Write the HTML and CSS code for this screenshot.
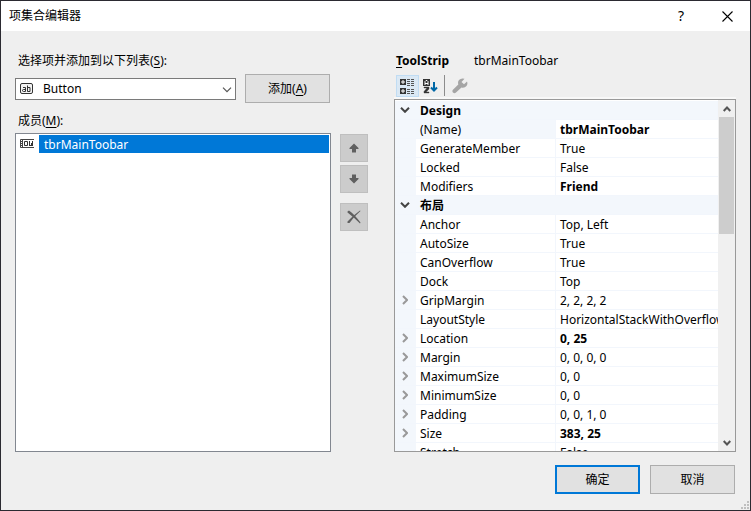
FILE: index.html
```html
<!DOCTYPE html>
<html lang="zh-CN">
<head>
<meta charset="utf-8">
<title>项集合编辑器</title>
<link rel="stylesheet" href="styles.css">
</head>
<body>
<div class="dialog">
  <header class="titlebar">
    <h1 class="title">项集合编辑器</h1>
    <button class="caption-button" type="button" aria-label="帮助"><span class="question">?</span></button>
    <button class="caption-button" type="button" aria-label="关闭"><svg width="11" height="11" viewBox="0 0 11 11"><path d="M.5.5l10 10M10.5.5l-10 10" fill="none" stroke="#000" stroke-width="1.1"/></svg></button>
  </header>

  <main class="content">
    <section class="members">
      <label class="field-label" for="item-type">选择项并添加到以下列表(<u>S</u>):</label>
      <div class="add-row">
        <div class="combo">
          <svg class="combo-icon" width="14" height="12" viewBox="0 0 14 12"><rect x=".5" y=".5" width="12" height="10" rx="1.5" fill="#f4f4f4" stroke="#333"/><path d="M3 4.500h2.500v4H3.500q-1 0-1-1t1-1h2M7.500 2.500v6h2.500v-4h-2.500" fill="none" stroke="#333"/></svg>
          <select id="item-type"><option>Button</option></select>
          <svg class="combo-arrow" width="10" height="6" viewBox="0 0 10 6"><path d="M1 .7l4 4 4-4" fill="none" stroke="#555" stroke-width="1.2"/></svg>
        </div>
        <button class="button" type="button" accesskey="a">添加(<u>A</u>)</button>
      </div>
      <div class="field-label" id="members-label">成员(<u>M</u>):</div>
      <ul class="listbox" role="listbox" aria-labelledby="members-label" tabindex="0">
        <li class="list-item" role="option" aria-selected="true">
          <svg class="item-icon" width="14" height="10" viewBox="0 0 14 10"><path d="M14 .5H.5v8H14M.5 2.500h2M.5 4.500h2M.5 6.500h2M2.500.5v8" fill="none" stroke="#444"/><path d="M4.500 2.500h3v4h-3zM9.500 2v5M10 6.500h3M12.500 2v5M11.500 4v3" fill="none" stroke="#333"/></svg>
          <span class="item-text">tbrMainToobar</span>
        </li>
      </ul>
    </section>

    <div class="order">
      <button class="order-button" type="button" disabled aria-label="上移"><svg width="10" height="10" viewBox="0 0 10 10"><path d="M5 .5L9.500 5v1H7v3.500H3V6H.5V5z" fill="#606060"/></svg></button>
      <button class="order-button" type="button" disabled aria-label="下移"><svg width="10" height="10" viewBox="0 0 10 10"><path d="M5 9.500L9.500 5V4H7V.5H3V4H.5v1z" fill="#606060"/></svg></button>
      <button class="order-button remove" type="button" disabled aria-label="移除"><svg width="14" height="14" viewBox="0 0 14 14"><path d="M.5 1.500L2 .5Q7.500 4.500 13.500 12.500L13 13.500Q7 7.500 .5 2.500z" fill="#606060"/><path d="M13.500 1L13 .5Q6 5.500.5 11.500v1.500h2Q7 6.500 13.500 1z" fill="#606060"/></svg></button>
    </div>

    <section class="properties">
      <h2 class="object"><b><u>T</u>oolStrip</b><span>tbrMainToobar</span></h2>
      <div class="toolbar" role="toolbar">
        <button class="tool active" type="button" aria-label="按分类顺序"><svg width="15" height="15" viewBox="0 0 15 15"><path d="M0 0h6v6H0zM0 9h6v6H0z" fill="#333"/><path d="M1 3h4M3 1v4M1 12h4M3 10v4" stroke="#fff"/><path d="M7 .5h3M11 .5h3M7 2.500h3M11 2.500h3M7 4.500h3M11 4.500h3M7 6.500h3M11 6.500h3M7 10.500h3M11 10.500h3M7 12.500h3M11 12.500h3M7 14.500h3M11 14.500h3" stroke="#555"/></svg></button>
        <button class="tool" type="button" aria-label="字母顺序"><svg width="15" height="15" viewBox="0 0 15 15"><path d="M0 0h7v7H0z" fill="#333"/><path d="M2 6V2.500L3 1.500h1l1 1V6M2 4.500h3" fill="none" stroke="#fff"/><path d="M1 8h5v2L3.200 13H6v1H1v-1.500L4 9H1z" fill="#333" stroke="#333" stroke-width=".4"/><path d="M11 3v9M8 8.500l3 3 3-3" fill="none" stroke="#0067a6" stroke-width="2"/></svg></button>
        <span class="separator"></span>
        <button class="tool wrench" type="button" disabled aria-label="属性页"><svg width="16" height="16" viewBox="0 0 16 16"><path d="M15 3.500l-3 2.700L9.500 4 12.500.8Q9-.2 7 2 5.500 4 6.300 6.500L.7 12Q0 13.500 1 14.500q1.200 1.200 2.700.2L9.500 9.500q3 .8 5-1.500 1.500-2 .5-4.500z" fill="#a5a5a5"/></svg></button>
      </div>
      <div class="grid">
        <div class="viewport">
          <table class="table">
            <colgroup><col class="gutter-col"><col class="name-col"><col></colgroup>
            <tbody>
              <tr class="category"><td><button class="toggle" type="button" aria-label="折叠"><svg width="10" height="6" viewBox="0 0 10 6"><path d="M1 .8l4 4 4-4"/></svg></button></td><th colspan="2">Design</th></tr>
              <tr class="current"><td></td><th>(Name)</th><td class="changed">tbrMainToobar</td></tr>
              <tr><td></td><th>GenerateMember</th><td>True</td></tr>
              <tr><td></td><th>Locked</th><td>False</td></tr>
              <tr><td></td><th>Modifiers</th><td class="changed">Friend</td></tr>
              <tr class="category"><td><button class="toggle" type="button" aria-label="折叠"><svg width="10" height="6" viewBox="0 0 10 6"><path d="M1 .8l4 4 4-4"/></svg></button></td><th colspan="2">布局</th></tr>
              <tr><td></td><th>Anchor</th><td>Top, Left</td></tr>
              <tr><td></td><th>AutoSize</th><td>True</td></tr>
              <tr><td></td><th>CanOverflow</th><td>True</td></tr>
              <tr><td></td><th>Dock</th><td>Top</td></tr>
              <tr><td><button class="toggle" type="button" aria-label="展开"><svg width="6" height="10" viewBox="0 0 6 10"><path d="M1 1l4 4-4 4"/></svg></button></td><th>GripMargin</th><td>2, 2, 2, 2</td></tr>
              <tr><td></td><th>LayoutStyle</th><td>HorizontalStackWithOverflow</td></tr>
              <tr><td><button class="toggle" type="button" aria-label="展开"><svg width="6" height="10" viewBox="0 0 6 10"><path d="M1 1l4 4-4 4"/></svg></button></td><th>Location</th><td class="changed">0, 25</td></tr>
              <tr><td><button class="toggle" type="button" aria-label="展开"><svg width="6" height="10" viewBox="0 0 6 10"><path d="M1 1l4 4-4 4"/></svg></button></td><th>Margin</th><td>0, 0, 0, 0</td></tr>
              <tr><td><button class="toggle" type="button" aria-label="展开"><svg width="6" height="10" viewBox="0 0 6 10"><path d="M1 1l4 4-4 4"/></svg></button></td><th>MaximumSize</th><td>0, 0</td></tr>
              <tr><td><button class="toggle" type="button" aria-label="展开"><svg width="6" height="10" viewBox="0 0 6 10"><path d="M1 1l4 4-4 4"/></svg></button></td><th>MinimumSize</th><td>0, 0</td></tr>
              <tr><td><button class="toggle" type="button" aria-label="展开"><svg width="6" height="10" viewBox="0 0 6 10"><path d="M1 1l4 4-4 4"/></svg></button></td><th>Padding</th><td>0, 0, 1, 0</td></tr>
              <tr><td><button class="toggle" type="button" aria-label="展开"><svg width="6" height="10" viewBox="0 0 6 10"><path d="M1 1l4 4-4 4"/></svg></button></td><th>Size</th><td class="changed">383, 25</td></tr>
              <tr><td></td><th>Stretch</th><td>False</td></tr>
            </tbody>
          </table>
        </div>
        <div class="scrollbar">
          <button class="scroll-button" type="button" aria-label="向上滚动"><svg width="8" height="6" viewBox="0 0 8 6"><path d="M.7 5L4 1.500 7.300 5" fill="none" stroke="#555" stroke-width="2"/></svg></button>
          <div class="track"><div class="thumb"></div></div>
          <button class="scroll-button" type="button" aria-label="向下滚动"><svg width="8" height="6" viewBox="0 0 8 6"><path d="M.7 1L4 4.500 7.300 1" fill="none" stroke="#555" stroke-width="2"/></svg></button>
        </div>
      </div>
    </section>
  </main>

  <footer class="footer">
    <button class="button primary" type="button">确定</button>
    <button class="button" type="button">取消</button>
  </footer>
  <svg class="grip" width="8" height="8" viewBox="0 0 8 8"><path d="M6 0h2v2H6zM3 3h2v2H3zM6 3h2v2H6zM0 6h2v2H0zM3 6h2v2H3zM6 6h2v2H6z" fill="#bfbfbf"/></svg>
</div>
</body>
</html>
```
FILE: styles.css
```css
* { box-sizing: border-box; }

body {
  margin: 0;
  font: 12px/16px "Noto Sans", "Noto Sans CJK SC", sans-serif;
  color: #000;
}

button, select { font: inherit; color: inherit; }
button { padding: 0; }
svg { display: block; flex: none; }
u { text-underline-offset: 2px; }

.dialog {
  position: relative;
  display: flex;
  flex-direction: column;
  height: 100vh;
  background: #efefef;
  border: 1px solid #2b2a31;
}

.titlebar {
  display: flex;
  height: 30px;
  align-items: center;
  padding-left: 8px;
  background: #fff;
}
.title { flex: 1; margin: 0; font-size: 12px; font-weight: 400; }
.caption-button {
  display: flex;
  width: 46px;
  height: 30px;
  align-items: center;
  justify-content: center;
  background: none;
  border: 0;
}
.question { font-size: 14px; }

.content {
  display: flex;
  flex: 1;
  min-height: 0;
  padding: 22px 14px 0;
}

.members, .properties {
  display: flex;
  min-width: 0;
  min-height: 0;
  flex-direction: column;
}
.members { flex: 316 1 0; }
.properties { flex: 342 1 0; }
.field-label { padding-left: 3px; }

.add-row {
  display: flex;
  align-items: center;
  gap: 9px;
  margin: 5px 1px 10px 0;
}
.combo { position: relative; flex: 1; }
.combo select {
  display: block;
  width: 100%;
  height: 22px;
  padding: 0 24px 0 27px;
  appearance: none;
  background: #fff;
  border: 1px solid #7a7a7a;
  border-radius: 0;
}
.combo-icon { position: absolute; left: 5px; top: 5px; }
.combo-arrow { position: absolute; right: 4px; top: 9px; pointer-events: none; }

.button {
  width: 85px;
  height: 29px;
  background: #e1e1e1;
  border: 1px solid #adadad;
}
.primary { border: 2px solid #0078d7; }

.listbox {
  flex: 1;
  margin: 4px 0 0;
  padding: 1px;
  list-style: none;
  background: #fff;
  border: 1px solid #828790;
}
.list-item { display: flex; height: 18px; align-items: center; }
.item-icon { margin: 0 5px 0 3px; }
.item-text {
  flex: 1;
  padding: 2px 0 0 5px;
  color: #fff;
  background: #0078d7;
}

.order {
  display: flex;
  flex-direction: column;
  gap: 3px;
  margin: 0 26px 0 9px;
  padding-top: 81px;
}
.order-button {
  display: flex;
  width: 28px;
  height: 28px;
  align-items: center;
  justify-content: center;
  background: #ccc;
  border: 1px solid #bfbfbf;
}
.remove { margin-top: 7px; }

.object {
  display: flex;
  gap: 25px;
  margin: 0;
  padding-left: 2px;
  font-size: 12px;
  font-weight: 400;
}
.toolbar {
  display: flex;
  height: 24px;
  margin-top: 6px;
  padding-left: 2px;
  border-bottom: 2px solid #f8f8f8;
}
.tool {
  display: flex;
  width: 23px;
  height: 22px;
  align-items: center;
  justify-content: center;
  background: none;
  border: 0;
}
.active { background: #dae8f4; border: 1px solid #c0dcf3; }
.separator { width: 1px; height: 21px; margin: 0 3px 0 2px; background: #8c8c8c; }

.grid {
  display: flex;
  flex: 1 1 0;
  min-height: 0;
  background: #fff;
  border: 1px solid #999;
}
.viewport { flex: 1; min-width: 0; padding-top: 1px; overflow: hidden; }
.table {
  width: 100%;
  table-layout: fixed;
  border-collapse: separate;
  border-spacing: 0;
}
.gutter-col { width: 21px; }
.name-col { width: 140px; }
.table th, .table td {
  height: 19px;
  padding: 2px 0 0 4px;
  overflow: hidden;
  font-weight: 400;
  line-height: 16px;
  text-align: left;
  white-space: nowrap;
  border-bottom: 1px solid #f2f6fc;
}
.table th { border-right: 1px solid #f2f6fc; }
.table td:first-child, .category th, .current th { background: #f3f7fc; }
.table td:first-child { padding: 0; }
.table .category th, .table .changed { font-weight: 700; }
.toggle {
  display: flex;
  width: 20px;
  height: 18px;
  align-items: center;
  justify-content: center;
  background: none;
  border: 0;
}
.toggle path { fill: none; stroke: #999; stroke-width: 2; }
.category .toggle path { stroke: #444; }

.scrollbar {
  display: flex;
  width: 17px;
  flex-direction: column;
  padding-left: 1px;
  background: #f0f0f0;
}
.scroll-button {
  display: flex;
  height: 17px;
  align-items: center;
  justify-content: center;
  background: none;
  border: 0;
}
.track { flex: 1; }
.thumb { width: 15px; height: 37%; background: #cdcdcd; }

.footer {
  display: flex;
  justify-content: flex-end;
  gap: 10px;
  padding: 13px 15px 16px;
}
.grip { position: absolute; right: 1px; bottom: 1px; }
```
